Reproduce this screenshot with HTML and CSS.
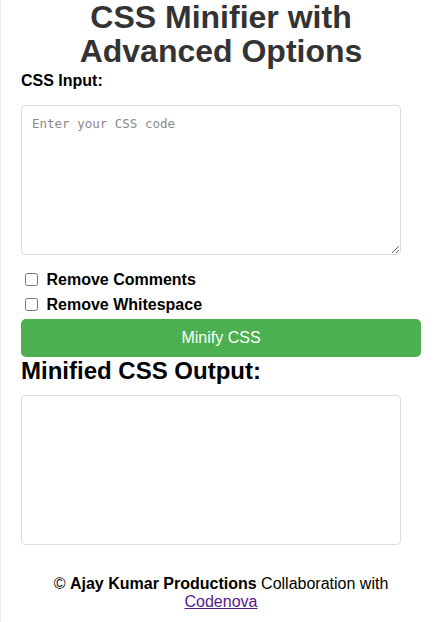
FILE: index.html
```html
<!DOCTYPE html>
<html lang="en">
<head>
<meta charset="UTF-8">
<title>CSS Minifier with Advanced Options</title>
<link rel="stylesheet" href="styles.css">
</head>
<body>
<div class="container">
  <h1 class="title">CSS Minifier with Advanced Options</h1>
  <label class="field-label" for="cssInput">CSS Input:</label>
  <textarea id="cssInput" class="code-area" placeholder="Enter your CSS code"></textarea>
  <div class="options">
    <label class="option"><input type="checkbox" class="check"> Remove Comments</label>
    <label class="option"><input type="checkbox" class="check"> Remove Whitespace</label>
  </div>
  <button class="minify-btn">Minify CSS</button>
  <h2 class="output-title">Minified CSS Output:</h2>
  <textarea class="code-area output-area" readonly></textarea>
  <footer class="footer">© <strong>Ajay Kumar Productions</strong> Collaboration with <a class="footer-link" href="#">Codenova</a></footer>
</div>
</body>
</html>
```

FILE: styles.css
```css
html, body {
  margin: 0;
  padding: 0;
}

body {
  background: #ececec;
  font-family: "Liberation Sans", Arial, sans-serif;
  color: #000;
}

.container {
  background: #fff;
  margin-left: 1px;
  padding: 0 20px 20px 20px;
  min-height: 622px;
  box-sizing: border-box;
  display: flex;
  flex-direction: column;
}

.title {
  margin: 0;
  font-size: 32px;
  line-height: 34px;
  text-align: center;
  color: #333;
  font-weight: bold;
}

.field-label {
  display: block;
  font-weight: bold;
  font-size: 16px;
  line-height: 18px;
  margin-top: 4px;
}

.code-area {
  display: block;
  width: 380px;
  height: 150px;
  box-sizing: border-box;
  padding: 10px;
  border: 1px solid #ddd;
  border-radius: 4px;
  font-family: "DejaVu Sans Mono", "Liberation Mono", monospace;
  font-size: 12.5px;
  margin: 15px 0 0 0;
  resize: vertical;
}

.output-area {
  resize: none;
}

.code-area::placeholder {
  color: #8a8a8a;
}

.options {
  display: flex;
  flex-direction: column;
  gap: 6px;
  margin-top: 15px;
}

.option {
  display: flex;
  align-items: center;
  height: 19px;
  font-weight: bold;
  font-size: 16px;
  white-space: pre;
}

.check {
  width: 13px;
  height: 13px;
  margin: 0 4px 0 4px;
}

.minify-btn {
  display: block;
  width: 400px;
  height: 38px;
  margin-top: 5px;
  background: #4caf50;
  color: #fff;
  border: none;
  border-radius: 5px;
  font-family: "Liberation Sans", Arial, sans-serif;
  font-size: 16px;
}

.output-title {
  margin: 0;
  font-size: 24px;
  line-height: 28px;
  font-weight: bold;
}

.output-title + .code-area {
  margin-top: 10px;
}

.footer {
  margin-top: 30px;
  text-align: center;
  font-size: 16px;
  line-height: 18px;
}

.footer-link {
  color: #551a8b;
}
```
